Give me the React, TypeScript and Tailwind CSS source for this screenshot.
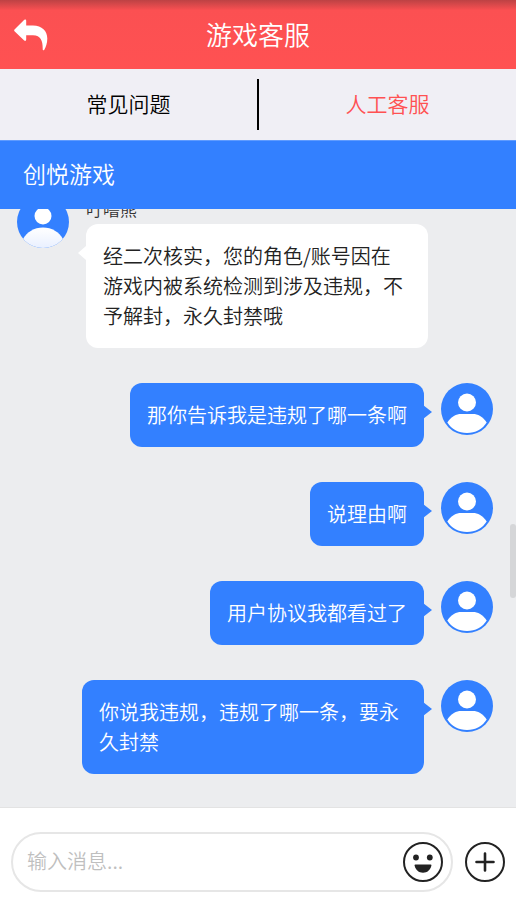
import { useId, useState } from "react";
import type { FormEvent } from "react";

type Message = { id: number; from: "agent" | "user"; name?: string; text: string };

const MESSAGES: Message[] = [
  { id: 1, from: "agent", name: "叮噜熊", text: "经二次核实，您的角色/账号因在游戏内被系统检测到涉及违规，不予解封，永久封禁哦" },
  { id: 2, from: "user", text: "那你告诉我是违规了哪一条啊" },
  { id: 3, from: "user", text: "说理由啊" },
  { id: 4, from: "user", text: "用户协议我都看过了" },
  { id: 5, from: "user", text: "你说我违规，违规了哪一条，要永久封禁" },
];

function BackIcon() {
  return (
    <svg viewBox="0 0 34 32" className="h-8 w-[34px]" fill="#fff" aria-hidden="true">
      <path d="M0.5 10.5 10.3 0.8Q12.2-0.2 12.2 1.8V6.6H19C28 6.9 33.3 12 33.3 19.5C33.3 24 32 28 30.2 31Q28.6 31.8 28.7 30C28.8 22 27 16.6 19 16.3H12.2V20.5Q12 22.6 10.2 21.6L0.5 12.3Q-0.2 11.3 0.5 10.5Z" />
    </svg>
  );
}

function AgentAvatar() {
  const id = useId();
  return (
    <svg viewBox="0 0 52 52" className="size-[52px] shrink-0" aria-hidden="true">
      <defs>
        <linearGradient id={`${id}-g`} x1="0" y1="0" x2="0" y2="1">
          <stop offset="0" stopColor="#fff" />
          <stop offset="1" stopColor="#e9f0ff" />
        </linearGradient>
        <clipPath id={`${id}-c`}><circle cx="26" cy="26" r="26" /></clipPath>
      </defs>
      <g clipPath={`url(#${id}-c)`}>
        <rect width="52" height="52" fill="#3380ff" />
        <circle cx="26" cy="20" r="8.5" fill="#fff" />
        <path d="M6 43C10 36 17 31.5 26 31.5S42 36 46 43V52H6Z" fill={`url(#${id}-g)`} />
      </g>
    </svg>
  );
}

function UserAvatar() {
  return (
    <svg viewBox="0 0 52 52" className="size-[52px] shrink-0" aria-hidden="true">
      <circle cx="26" cy="26" r="26" fill="#3380ff" />
      <circle cx="26" cy="19.5" r="9" fill="#fff" />
      <path d="M6.3 39.5C10 33.5 15.5 31 20 31H32C36.5 31 42 33.5 45.7 39.5C41.5 46 34.5 50 26 50S10.5 46 6.3 39.5Z" fill="#fff" />
    </svg>
  );
}

function SmileIcon() {
  return (
    <svg viewBox="0 0 40 40" className="size-10" aria-hidden="true">
      <circle cx="20" cy="20" r="19" fill="none" stroke="#222" strokeWidth="2" />
      <circle cx="13" cy="15.5" r="2.9" fill="#222" />
      <circle cx="26.8" cy="15.5" r="2.9" fill="#222" />
      <path d="M12.4 22.5H27.6Q28.6 22.5 28.4 23.6C27.4 28.2 24.2 30.8 20 30.8S12.6 28.2 11.6 23.6Q11.4 22.5 12.4 22.5Z" fill="#222" />
    </svg>
  );
}

function PlusIcon() {
  return (
    <svg viewBox="0 0 40 40" className="size-10" fill="none" stroke="#222" aria-hidden="true">
      <circle cx="20" cy="20" r="19" strokeWidth="2" />
      <path d="M20 11.5V28.5M11.5 20H28.5" strokeWidth="2.6" strokeLinecap="round" />
    </svg>
  );
}

function AgentMessage({ message }: { message: Message }) {
  return (
    <li className="flex items-start gap-[17px] pr-16">
      <AgentAvatar />
      <div className="min-w-0">
        <div className="mb-0.5 text-[17px] leading-[26px] text-[#333]">{message.name}</div>
        <div className="relative max-w-[342px] rounded-xl bg-white py-[17px] pl-[17px] pr-6 text-xl leading-[30px] text-[#222]">
          <svg viewBox="0 0 8 14" className="absolute -left-2 top-[22px] h-3.5 w-2" fill="#fff" aria-hidden="true"><path d="M8 0 0 7 8 14Z" /></svg>
          {message.text}
        </div>
      </div>
    </li>
  );
}

function UserMessage({ message }: { message: Message }) {
  return (
    <li className="flex items-start justify-end gap-[17px] pl-14">
      <div className="relative max-w-[342px] rounded-xl bg-[#3380ff] px-[17px] py-[17px] text-xl leading-[30px] text-white">
        {message.text}
        <svg viewBox="0 0 9 14" className="absolute -right-2 top-[22px] h-3.5 w-[9px]" fill="#3380ff" aria-hidden="true"><path d="M0 0 9 7 0 14Z" /></svg>
      </div>
      <UserAvatar />
    </li>
  );
}

export default function App() {
  const [tab, setTab] = useState<"faq" | "agent">("agent");
  const [draft, setDraft] = useState("");

  function handleSubmit(e: FormEvent) { e.preventDefault(); setDraft(""); }

  return (
    <div className="flex h-screen flex-col bg-[#ecedef] font-['Noto_Sans_CJK_SC',sans-serif] font-[350]">
      <header className="grid h-[69px] shrink-0 grid-cols-[1fr_auto_1fr] items-center bg-linear-to-b from-[#bd4244] via-[#fb5052] via-15% to-[#ff5152] px-3.5">
        <button type="button" aria-label="返回" className="justify-self-start"><BackIcon /></button>
        <h1 className="pb-0.5 text-[26px] leading-8 font-[350] text-white">游戏客服</h1>
      </header>

      <nav className="flex h-[71px] shrink-0 items-center bg-[#f0eff5] text-[21px]">
        <button type="button" onClick={() => setTab("faq")} className={`h-full flex-1 pb-0.5 ${tab === "faq" ? "text-[#ff5152]" : "text-black"}`}>常见问题</button>
        <span className="h-[51px] w-0.5 bg-black" />
        <button type="button" onClick={() => setTab("agent")} className={`h-full flex-1 pb-0.5 ${tab === "agent" ? "text-[#ff5152]" : "text-black"}`}>人工客服</button>
      </nav>

      <div className="flex h-[69px] shrink-0 items-center border-t border-[#5f9bff] bg-[#3380ff] px-[23px] pb-1">
        <h2 className="text-[23px] leading-8 font-[350] text-white">创悦游戏</h2>
      </div>

      <main className="relative flex min-h-0 flex-1 flex-col justify-end overflow-hidden">
        <ul className="flex flex-col gap-[35px] pb-[33px] pl-[17px] pr-[23px]">
          {MESSAGES.map(m => m.from === "agent" ? <AgentMessage key={m.id} message={m} /> : <UserMessage key={m.id} message={m} />)}
        </ul>
        <div className="absolute right-0 bottom-[35%] h-[74px] w-1.5 rounded-full bg-[#d5d6d8]" />
      </main>

      <form onSubmit={handleSubmit} className="flex h-[110px] shrink-0 items-center gap-3 border-t border-[#e3e3e3] bg-white px-[11px] pb-0.5">
        <div className="flex h-[60px] min-w-0 flex-1 items-center rounded-full border-2 border-[#e6e6e6] pl-3.5 pr-2">
          <input aria-label="输入消息" value={draft} onChange={(e) => setDraft(e.target.value)} placeholder="输入消息..." className="h-10 min-w-0 flex-1 pb-0.5 text-xl text-[#222] outline-none placeholder:text-[#bfbfbf]" />
          <button type="button" aria-label="表情"><SmileIcon /></button>
        </div>
        <button type="button" aria-label="更多"><PlusIcon /></button>
      </form>
    </div>
  );
}
